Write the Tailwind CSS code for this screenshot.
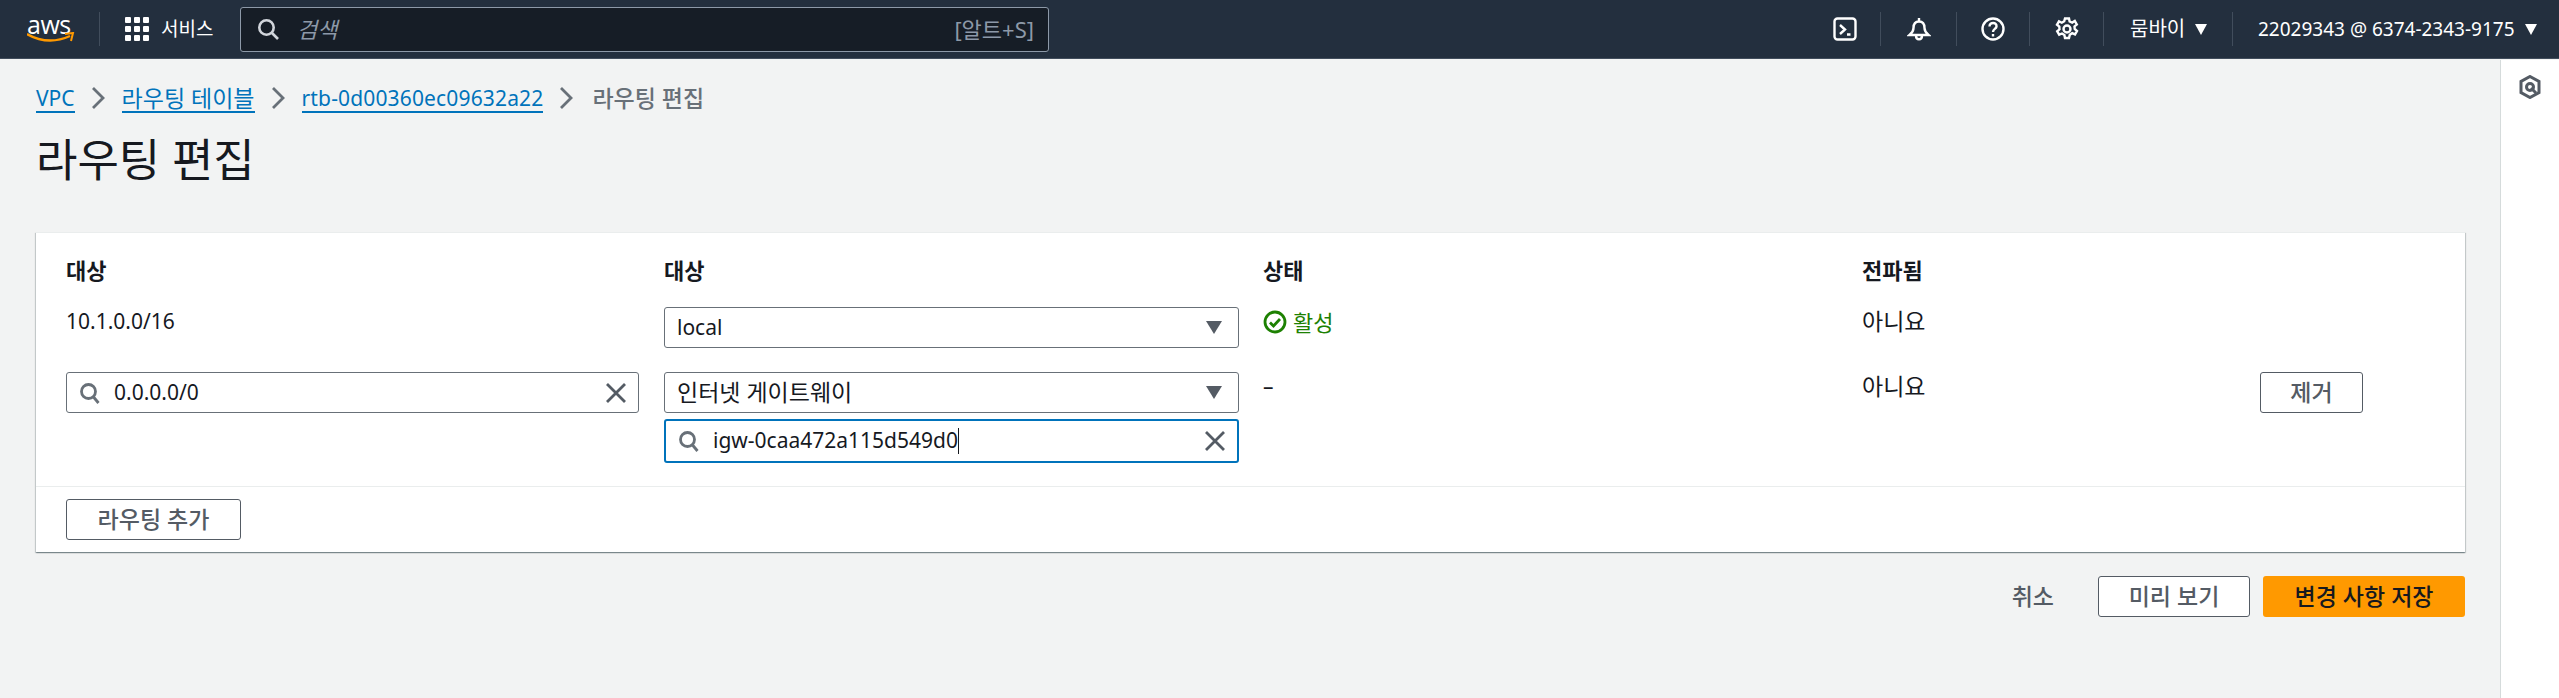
<!DOCTYPE html>
<html lang="ko">
<head>
  <meta charset="UTF-8">
  <title>라우팅 편집</title>
  <script src="https://cdn.jsdelivr.net/npm/@tailwindcss/browser@4"></script>
</head>
<body class="font-['Noto_Sans','Noto_Sans_CJK_KR',sans-serif] bg-[#f2f3f3] text-[#16191f] text-[21px] h-[698px] overflow-hidden flex flex-col">
  <!-- top nav -->
  <header class="h-[59px] shrink-0 bg-[#232f3e] border-b border-[#414d5c] flex items-center text-white">
    <div class="w-[100px] h-[34px] border-r border-[#414d5c] shrink-0 flex flex-col justify-center pl-[27px]">
      <span class="font-['Open_Sans',sans-serif] text-[25px] leading-[18px] font-medium tracking-[-0.5px]">aws</span>
      <svg class="-mt-[1px]" width="48" height="12" viewBox="0 0 48 12">
        <path d="M0 2 Q21 14 43 4" fill="none" stroke="#f90" stroke-width="2.4"/>
        <path d="M38 2 L46 1 L44 9" fill="none" stroke="#f90" stroke-width="2"/>
      </svg>
    </div>
    <div class="ml-[25px] w-[24px] h-[24px] grid grid-cols-3 gap-[3px] shrink-0">
      <i class="bg-white rounded-[1px]"></i><i class="bg-white rounded-[1px]"></i><i class="bg-white rounded-[1px]"></i>
      <i class="bg-white rounded-[1px]"></i><i class="bg-white rounded-[1px]"></i><i class="bg-white rounded-[1px]"></i>
      <i class="bg-white rounded-[1px]"></i><i class="bg-white rounded-[1px]"></i><i class="bg-white rounded-[1px]"></i>
    </div>
    <span class="ml-[12px] w-[79px] text-[19px] shrink-0">서비스</span>
    <div class="w-[809px] h-[45px] shrink-0 bg-[#161d26] border border-[#8d99a8] rounded-[3px] flex items-center pl-[16px] pr-[14px]">
      <svg width="22" height="22" viewBox="0 0 22 22" fill="none" stroke="#d1d5db" stroke-width="2.6"><circle cx="9.5" cy="9.5" r="7.2"/><path d="M15 15l6 6"/></svg>
      <span class="ml-[18px] italic text-[#8d99a8] text-[22px]">검색</span>
      <span class="ml-auto text-[#8d99a8] text-[22px]">[알트+S]</span>
    </div>
    <div class="ml-auto flex items-center h-[34px]">
      <div class="w-[48px] flex justify-start border-r border-[#414d5c] h-full items-center">
        <svg width="24" height="24" viewBox="0 0 24 24" fill="none" stroke="#fff" stroke-width="2.4"><rect x="1.5" y="1.5" width="21" height="21" rx="3"/><path d="M7 8l5 4.5L7 17M14 17.5h3.5"/></svg>
      </div>
      <div class="w-[76px] flex justify-center border-r border-[#414d5c] h-full items-center">
        <svg width="24" height="24" viewBox="0 0 24 24" fill="none" stroke="#fff" stroke-width="2.4"><path d="M12 1v3M6.5 11c0-4 2-6.5 5.5-6.5s5.500 2.500 5.500 6.500c0 3 1.500 5 4 7H2.500c2.500-2 4-4 4-7zM9 18.500c0 5 6 5 6 0"/></svg>
      </div>
      <div class="w-[73px] flex justify-center border-r border-[#414d5c] h-full items-center">
        <svg width="24" height="24" viewBox="0 0 24 24" fill="none" stroke="#fff" stroke-width="2.400"><circle cx="12" cy="12" r="10.500"/><path d="M8.500 9.500c0-5 7.500-4.500 7 0-.3 2.500-3.500 2.500-3.500 5.500"/><path d="M12 17v2.500"/></svg>
      </div>
      <div class="w-[74px] flex justify-center border-r border-[#414d5c] h-full items-center">
        <svg width="24" height="24" viewBox="0 0 24 24" fill="none" stroke="#fff" stroke-width="2.400"><path d="M10 1.500h4l.6 3 2.600 1.100 2.600-1.600 2 3.400-2.300 2 .2 2.600 2.300 2-2 3.400-2.800-1.200-2.400 1.500-.8 3.300h-4l-.6-3.100-2.400-1.400-2.800 1.200-2-3.400 2.300-2-.2-2.800-2.300-1.800 2-3.400 2.800 1.400 2.400-1.400z"/><circle cx="12" cy="12" r="3.500"/></svg>
      </div>
      <div class="w-[129px] pl-[26px] flex items-center border-r border-[#414d5c] h-full text-[20px]">
        <span>뭄바이</span><svg class="ml-[10px]" width="12" height="11" viewBox="0 0 12 11" fill="#fff"><path d="M0 0h12L6 11z"/></svg>
      </div>
      <div class="w-[326px] pl-[25px] flex items-center h-full text-[19px]">
        <span>22029343 @ 6374-2343-9175</span><svg class="ml-[10px]" width="12" height="11" viewBox="0 0 12 11" fill="#fff"><path d="M0 0h12L6 11z"/></svg>
      </div>
    </div>
  </header>

  <div class="flex flex-1 min-h-0">
    <main class="w-[2500px] shrink-0 pl-[36px] pr-[35px]">
      <!-- breadcrumb -->
      <nav class="flex items-center h-[34px] mt-[22px]">
        <a class="text-[#0073bb] border-b-2 border-[#0073bb] leading-[26px] mt-[2px]">VPC</a>
        <svg class="mx-[17px]" width="13" height="22" viewBox="0 0 13 22" fill="none" stroke="#687078" stroke-width="2.800"><path d="M1 1l10 10L1 21"/></svg>
        <a class="text-[#0073bb] border-b-2 border-[#0073bb] leading-[26px] mt-[2px] text-[23px]">라우팅 테이블</a>
        <svg class="mx-[17px]" width="13" height="22" viewBox="0 0 13 22" fill="none" stroke="#687078" stroke-width="2.800"><path d="M1 1l10 10L1 21"/></svg>
        <a class="text-[#0073bb] border-b-2 border-[#0073bb] leading-[26px] mt-[2px] tracking-[0.15px]">rtb-0d00360ec09632a22</a>
        <svg class="ml-[17px] mr-[19px]" width="13" height="22" viewBox="0 0 13 22" fill="none" stroke="#687078" stroke-width="2.800"><path d="M1 1l10 10L1 21"/></svg>
        <span class="text-[#687078] font-medium text-[23px]">라우팅 편집</span>
      </nav>
      <h1 class="text-[45px] leading-[60px] mt-[15px] text-[#16191f] font-normal">라우팅 편집</h1>

      <!-- routes card -->
      <section class="mt-[42px] bg-white h-[320px] border-t border-[#eaeded] shadow-[0_1px_1px_0_rgba(0,28,36,0.3),1px_1px_1px_0_rgba(0,28,36,0.15),-1px_1px_1px_0_rgba(0,28,36,0.15)] flex flex-col">
        <div class="grid grid-cols-[598px_599px_599px_398px_1fr] pl-[30px] pt-[22px] h-[253px] content-start">
          <div class="font-bold text-[22px] leading-[30px] h-[52px]">대상</div>
          <div class="font-bold text-[22px] leading-[30px]">대상</div>
          <div class="font-bold text-[22px] leading-[30px]">상태</div>
          <div class="font-bold text-[22px] leading-[30px]">전파됨</div>
          <div></div>

          <div class="h-[65px] leading-[28px]">10.1.0.0/16</div>
          <div class="w-[575px] h-[41px] border border-[#687078] rounded-[3px] flex items-center justify-between px-[12px]">
            <span>local</span>
            <svg class="mr-[4px]" width="16" height="13" viewBox="0 0 16 13" fill="#545b64"><path d="M0 0h16L8 13z"/></svg>
          </div>
          <div class="flex items-center h-[30px] gap-[6px] self-start text-[#1d8102] text-[22px]">
            <svg width="24" height="24" viewBox="0 0 24 24" fill="none" stroke="#1d8102" stroke-width="2.800"><circle cx="12" cy="12" r="10"/><path d="M7 12.500l3.500 3.500 6.500-7"/></svg>
            <span>활성</span>
          </div>
          <div class="leading-[28px] text-[23px]">아니요</div>
          <div></div>

          <div class="w-[573px] h-[41px] border border-[#687078] rounded-[3px] flex items-center px-[12px]">
            <svg width="22" height="22" viewBox="0 0 22 22" fill="none" stroke="#687078" stroke-width="2.800"><circle cx="9.500" cy="9.500" r="7"/><path d="M14.500 15l5 6"/></svg>
            <span class="ml-[13px]">0.0.0.0/0</span>
            <svg class="ml-auto" width="20" height="20" viewBox="0 0 20 20" fill="none" stroke="#545b64" stroke-width="2.800"><path d="M1 1l18 18M19 1L1 19"/></svg>
          </div>
          <div class="flex flex-col gap-[6px]">
            <div class="w-[575px] h-[41px] border border-[#687078] rounded-[3px] flex items-center justify-between px-[12px]">
              <span class="text-[23px]">인터넷 게이트웨이</span>
              <svg class="mr-[4px]" width="16" height="13" viewBox="0 0 16 13" fill="#545b64"><path d="M0 0h16L8 13z"/></svg>
            </div>
            <div class="w-[575px] h-[44px] border-2 border-[#0073bb] rounded-[3px] flex items-center px-[12px]">
              <svg width="22" height="22" viewBox="0 0 22 22" fill="none" stroke="#687078" stroke-width="2.800"><circle cx="9.500" cy="9.500" r="7"/><path d="M14.500 15l5 6"/></svg>
              <span class="ml-[13px]">igw-0caa472a115d549d0</span>
              <span class="w-[1px] h-[26px] bg-[#16191f]"></span>
              <svg class="ml-auto" width="20" height="20" viewBox="0 0 20 20" fill="none" stroke="#545b64" stroke-width="2.800"><path d="M1 1l18 18M19 1L1 19"/></svg>
            </div>
          </div>
          <div class="leading-[28px]">–</div>
          <div class="leading-[28px] text-[23px]">아니요</div>
          <div>
            <button class="w-[103px] h-[41px] border border-[#545b64] rounded-[3px] text-[#545b64] font-medium text-[23px] leading-none">제거</button>
          </div>
        </div>
        <div class="h-[66px] border-t border-[#eaeded] pl-[30px] pt-[12px]">
          <button class="w-[175px] h-[41px] border border-[#545b64] rounded-[3px] text-[#545b64] font-medium text-[23px] leading-none">라우팅 추가</button>
        </div>
      </section>

      <!-- form actions -->
      <div class="flex justify-end items-center mt-[24px]">
        <button class="text-[#545b64] font-medium text-[23px] leading-none mr-[44px]">취소</button>
        <button class="w-[152px] h-[41px] bg-white border border-[#545b64] rounded-[3px] text-[#545b64] font-medium text-[23px] leading-none mr-[13px]">미리 보기</button>
        <button class="w-[202px] h-[41px] bg-[#ff9900] rounded-[3px] text-[#16191f] font-medium text-[23px] leading-none">변경 사항 저장</button>
      </div>
    </main>

    <!-- right rail -->
    <aside class="flex-1 mt-[1px] bg-white border-l border-[#d5dbdb] flex justify-center pt-[15px]">
      <svg width="22" height="24" viewBox="0 0 22 24" fill="none" stroke="#545b64" stroke-width="3"><path d="M11 1.500l9 5v11l-9 5-9-5v-11z"/><circle cx="11" cy="12" r="3.500"/><path d="M12 13l5 5"/></svg>
    </aside>
  </div>
</body>
</html>
